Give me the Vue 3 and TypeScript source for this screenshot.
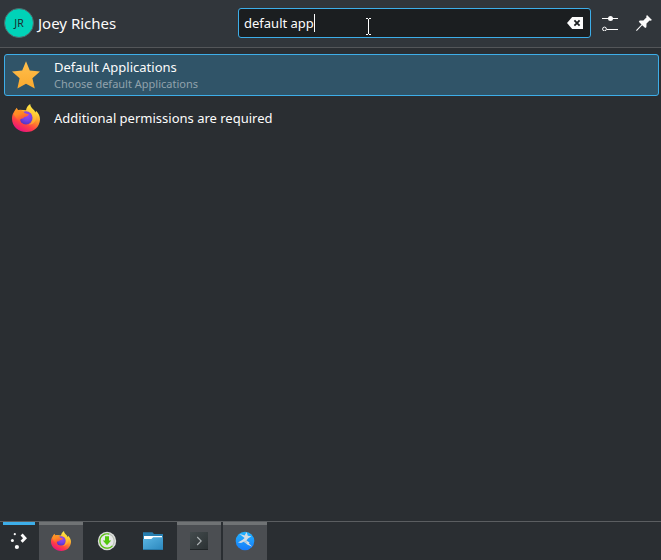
<script setup lang="ts">
import { ref } from 'vue'

interface Result {
  title: string
  subtitle?: string
  icon: 'star' | 'firefox'
}

interface Task {
  name: string
  icon: 'firefox' | 'download' | 'folder' | 'terminal' | 'bird'
  running: boolean
}

const query = ref('default app')
const selected = ref(0)

const results: Result[] = [
  { title: 'Default Applications', subtitle: 'Choose default Applications', icon: 'star' },
  { title: 'Additional permissions are required', icon: 'firefox' },
]

const tasks: Task[] = [
  { name: 'firefox', icon: 'firefox', running: true },
  { name: 'download', icon: 'download', running: false },
  { name: 'folder', icon: 'folder', running: false },
  { name: 'terminal', icon: 'terminal', running: true },
  { name: 'bird', icon: 'bird', running: true },
]
</script>

<template>
  <div class="launcher">
    <svg class="defs" width="0" height="0" aria-hidden="true">
      <defs>
        <linearGradient id="ff-body" x1="0.85" y1="0.05" x2="0.35" y2="1">
          <stop offset="0" stop-color="#fff44f" />
          <stop offset="0.25" stop-color="#ffd038" />
          <stop offset="0.5" stop-color="#ff8a2a" />
          <stop offset="0.74" stop-color="#ff3f45" />
          <stop offset="1" stop-color="#e8127f" />
        </linearGradient>
        <linearGradient id="ff-head" x1="0" y1="0" x2="0.4" y2="1">
          <stop offset="0" stop-color="#ff9a26" />
          <stop offset="0.5" stop-color="#ff8a24" />
          <stop offset="1" stop-color="#ff4a3c" />
        </linearGradient>
        <radialGradient id="ff-globe" cx="0.6" cy="0.3" r="0.8">
          <stop offset="0" stop-color="#9a48ee" />
          <stop offset="0.5" stop-color="#7542e5" />
          <stop offset="1" stop-color="#4a32b8" />
        </radialGradient>
        <linearGradient id="star-fill" x1="0" y1="0" x2="0" y2="1">
          <stop offset="0" stop-color="#ffc04d" />
          <stop offset="1" stop-color="#faa92e" />
        </linearGradient>
        <linearGradient id="folder-fill" x1="0" y1="0" x2="1" y2="1">
          <stop offset="0" stop-color="#5bb6e4" />
          <stop offset="1" stop-color="#2b87bd" />
        </linearGradient>
        <linearGradient id="term-fill" x1="0" y1="0" x2="1" y2="1">
          <stop offset="0" stop-color="#434b4d" />
          <stop offset="1" stop-color="#2b3133" />
        </linearGradient>
        <linearGradient id="bird-fill" x1="0" y1="0" x2="0" y2="1">
          <stop offset="0" stop-color="#22b4ff" />
          <stop offset="1" stop-color="#167bfa" />
        </linearGradient>
        <symbol id="i-star" viewBox="0 0 28 28">
          <path fill="url(#star-fill)" d="M14 0.3 L17.8 9.5 L28 10.5 L20.4 17.2 L22.8 27.5 L14 22.8 L5.4 27.5 L7.6 17.2 L0 10.5 L10.2 9.5 Z" />
        </symbol>
        <symbol id="i-firefox" viewBox="0 0 28 28">
          <path fill="url(#ff-body)" d="M3 6.2 L4.8 3.8 L5.5 6.2 L8 5.7 L14.1 6.3 C14.3 3.8 15.8 1.5 18.2 0 C18.3 3 20.4 4.5 22.2 6.2 L23.5 8.6 L24 6.8 C26.7 9.2 28 12.4 28 15.4 C27.7 22.6 22 28 14.3 28 C6.2 28 0 22 0 14.7 C0 12.4 0.6 9.6 2 8.1 Z" />
          <circle cx="14" cy="13.8" r="6.6" fill="url(#ff-globe)" />
          <path fill="url(#ff-head)" d="M1.8 10.4 L3 6.6 L4.9 4.3 L6.2 6.6 C8 5.6 10 6 11.4 7.6 C12.3 9.5 14.8 10 16.8 10.2 C16.4 11.8 14.6 12.6 12.4 13 L11 14.6 C9 14.2 7.9 15.4 8.2 17 C7.2 16.6 5.4 15.6 4.4 14.2 Z" />
          <path fill="#ffd338" d="M14.6 7 C18.6 7.4 21.2 10.6 20.6 14.6 C20.4 17.4 18.8 19.8 16.6 20.8 C22.2 20.4 25 16.2 23.7 11.4 C22.8 8.6 20.4 6.4 18.2 4.2 L14.3 5.8 Z" opacity="0.45" />
        </symbol>
        <symbol id="i-download" viewBox="0 0 20 20">
          <circle cx="10" cy="10" r="9.2" fill="#dcdedb" />
          <circle cx="10" cy="10" r="7.2" fill="#e6e8e6" stroke="#b9c0b7" stroke-width="1.1" />
          <path d="M12.2 3.1 A7.2 7.2 0 1 0 15.4 14.8" fill="none" stroke="#58c40c" stroke-width="1.2" />
          <path d="M8 5.2 H12 V9.6 H14.2 L10 14.2 L5.8 9.6 H8 Z" fill="#52c70c" />
        </symbol>
        <symbol id="i-folder" viewBox="0 0 20 20">
          <path d="M0 1.2 H9.4 L11 3 H20 V12 H0 Z" fill="#277eaf" />
          <path d="M1 5 H19 V10 H1 Z" fill="#fff" />
          <path d="M0 8 H8.3 L10.2 6.3 H20 V19 H0 Z" fill="url(#folder-fill)" />
          <path d="M0 18.5 H20" stroke="#2779a9" />
        </symbol>
        <symbol id="i-terminal" viewBox="0 0 18 18">
          <rect width="18" height="18" fill="url(#term-fill)" />
          <path d="M0 17.5 H18" stroke="#202527" />
          <path d="M7.2 5 L11.2 9 L7.2 13" fill="none" stroke="#adb3b5" stroke-width="1.1" />
        </symbol>
        <symbol id="i-bird" viewBox="0 0 20 20">
          <circle cx="10" cy="10" r="9.3" fill="url(#bird-fill)" />
          <path d="M4.2 2.8 L9.6 4.6 L11.6 0.9 L12.8 4.8 L16.4 5.2 L13 7.4 L11.4 9.4 L14.6 11.4 L13.8 12.2 L17.2 15.8 L12.6 13.8 L8.8 10.8 L6 12 L3 11.6 L7.6 8.8 L9.6 7 Z" fill="#d2dce4" />
          <path d="M8.6 10.6 L11.4 9.4 L12.2 12.8 Z" fill="#a9c6da" />
        </symbol>
      </defs>
    </svg>

    <header class="header">
      <div class="user">
        <span class="avatar">JR</span>
        <span class="user-name">Joey Riches</span>
      </div>
      <div class="search">
        <span class="query">{{ query }}</span><span class="caret"></span>
        <svg class="clear" width="16" height="12" viewBox="0 0 16 12">
          <path d="M5.2 0 H16 V12 H5.2 L0 6 Z" fill="#fcfcfc" />
          <path d="M7.4 3.4 L12.6 8.6 M12.6 3.4 L7.4 8.6" stroke="#1b1e20" stroke-width="1.8" />
        </svg>
        <svg class="pointer" width="7" height="17" viewBox="0 0 7 17">
          <path d="M1 0.5 H3 M4 0.5 H6 M3.5 1 V16 M1 16.5 H3 M4 16.5 H6" stroke="#fff" fill="none" />
        </svg>
      </div>
      <svg class="configure" width="16" height="16" viewBox="0 0 16 16">
        <path d="M0 3.5 H16 M5 14.5 H16" stroke="#fcfcfc" />
        <circle cx="8.5" cy="3.5" r="2.5" fill="#fcfcfc" />
        <circle cx="2.5" cy="14" r="1.9" fill="none" stroke="#fcfcfc" />
      </svg>
      <svg class="pin" width="16" height="16" viewBox="0 0 16 16">
        <path d="M11 0 L16 5 L14.5 5.8 L13.6 5.4 L10.5 8.5 L10.4 12.2 L9.2 13 L6.2 10.2 L0.8 16 L0 15.2 L5.5 9.5 L2.8 6.8 L3.7 5.5 L7.4 5.5 L10.6 2.3 L10.2 1.3 Z" fill="#fcfcfc" />
      </svg>
    </header>

    <main class="results">
      <div
        v-for="(result, index) in results"
        :key="result.title"
        class="result"
        :class="{ active: index === selected }"
        @mouseenter="selected = index"
      >
        <svg class="result-icon" width="28" height="28"><use :href="`#i-${result.icon}`" /></svg>
        <div class="labels">
          <span class="title">{{ result.title }}</span>
          <span v-if="result.subtitle" class="subtitle">{{ result.subtitle }}</span>
        </div>
      </div>
    </main>

    <footer class="panel">
      <div class="kickoff">
        <svg width="18" height="18" viewBox="0 0 18 18">
          <path d="M11.6 2.6 L15 6.2 L11.6 9.8" fill="none" stroke="#fcfcfc" stroke-width="2.9" />
          <circle cx="4.8" cy="2.2" r="1.1" fill="#fcfcfc" />
          <circle cx="2.4" cy="8.6" r="1.5" fill="#fcfcfc" />
          <circle cx="6.9" cy="15" r="2.1" fill="#fcfcfc" />
        </svg>
      </div>
      <div v-for="task in tasks" :key="task.name" class="task" :class="{ running: task.running }">
        <svg class="task-icon" :class="task.icon"><use :href="`#i-${task.icon}`" /></svg>
      </div>
    </footer>
  </div>
</template>

<style>
body {
  margin: 0;
  background: #2a2e32;
}
</style>

<style scoped>
.launcher {
  display: flex;
  flex-direction: column;
  width: 661px;
  height: 560px;
  overflow: hidden;
  background: #2a2e32;
  color: #fcfcfc;
  font-family: 'Noto Sans', sans-serif;
  font-size: 13px;
}

.launcher svg {
  display: block;
  flex: none;
}

.launcher .defs {
  position: absolute;
}

.header {
  display: flex;
  align-items: center;
  box-sizing: border-box;
  flex: none;
  height: 48px;
  padding: 0 9px 2px 4px;
  background: #31363b;
  border-bottom: 1px solid #535659;
}

.user {
  display: flex;
  align-items: center;
  gap: 4px;
  width: 234px;
}

.avatar {
  display: flex;
  align-items: center;
  justify-content: center;
  box-sizing: border-box;
  width: 30px;
  height: 30px;
  border: 1px solid #51686b;
  border-radius: 50%;
  background: #00d3b8;
  color: #1d2b2e;
  font-size: 10.5px;
}

.user-name {
  font-size: 15px;
  line-height: 20px;
}

.search {
  position: relative;
  display: flex;
  align-items: center;
  box-sizing: border-box;
  width: 353px;
  height: 30px;
  padding: 0 7px 0 5px;
  border: 1px solid #3daee9;
  border-radius: 3px;
  background: #1b1e20;
}

.query {
  line-height: 18px;
}

.caret {
  width: 1px;
  height: 18px;
  background: #fcfcfc;
}

.clear {
  margin-left: auto;
}

.launcher .pointer {
  position: absolute;
  left: 126px;
  top: 9px;
}

.configure {
  margin-left: 11px;
}

.pin {
  margin-left: auto;
}

.results {
  flex: 1;
  padding: 6px 2px 0 4px;
}

.result {
  display: flex;
  align-items: center;
  gap: 14px;
  box-sizing: border-box;
  height: 42px;
  padding: 0 7px;
  border: 1px solid transparent;
  border-radius: 3px;
}

.result + .result {
  margin-top: 1px;
}

.result.active {
  border-color: #3daee9;
  background: #305468;
}

.labels {
  display: flex;
  flex-direction: column;
}

.title {
  line-height: 18px;
}

.subtitle {
  padding-bottom: 2px;
  color: #90a2ac;
  font-size: 11px;
  line-height: 15px;
}

.panel {
  display: flex;
  flex: none;
  height: 38px;
  padding-left: 3px;
  border-top: 1px solid #5b5e61;
}

.kickoff {
  display: flex;
  align-items: center;
  justify-content: center;
  box-sizing: border-box;
  width: 32px;
  margin-right: 4px;
  padding-bottom: 3px;
  border-top: 3px solid #3daee9;
}

.task {
  display: flex;
  align-items: center;
  justify-content: center;
  box-sizing: border-box;
  width: 44px;
  margin-right: 2px;
  border-top: 3px solid transparent;
  padding-bottom: 3px;
}

.task.running {
  border-top-color: #707375;
  background: #4b4e52;
}

.task-icon {
  width: 20px;
  height: 20px;
}

.task-icon.terminal {
  width: 18px;
  height: 18px;
}
</style>
